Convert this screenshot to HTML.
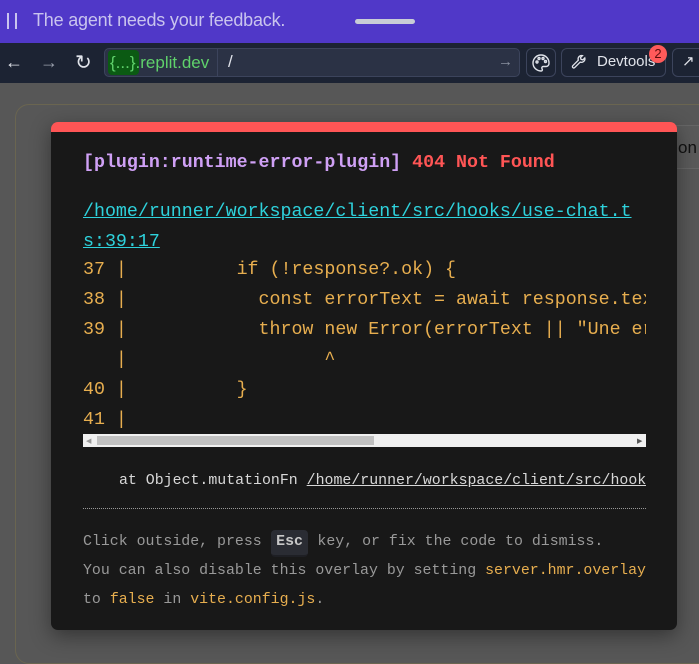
<!DOCTYPE html>
<html><head><meta charset="utf-8"><style>
*{margin:0;padding:0;box-sizing:border-box}
body{width:699px;height:649px;overflow:hidden;background:#575757;font-family:"Liberation Sans",sans-serif;position:relative}
.top{position:absolute;left:0;top:0;width:699px;height:43px;background:#5038c8;color:#c9c4ee;font-size:18px}
.nav{position:absolute;left:0;top:43px;width:699px;height:40px;background:#1c2333;color:#e0e3ea}
.abs{position:absolute}
.m{font-family:"Liberation Mono",monospace;white-space:pre;position:absolute}
.panel{position:absolute;left:51px;top:122px;width:626px;height:508px;background:#181818;border-radius:7px;border-top:10px solid #ff5555;overflow:hidden;box-shadow:0 6px 20px rgba(0,0,0,.4)}
.code{color:#e7ae4f;font-size:18.3px}
.kbd{display:inline-block;background:#2a2c33;border-radius:4px;padding:0 5.5px;line-height:25px;border-bottom:2px solid #1e1f24;color:#c8c8c8;font-weight:bold}
</style></head><body>
<div class="top">
 <div class="abs" style="left:7px;top:13px;width:2px;height:16px;background:#c9c4ee"></div>
 <div class="abs" style="left:15px;top:13px;width:2px;height:16px;background:#c9c4ee"></div>
 <div class="abs" style="left:33px;top:10px;letter-spacing:-0.2px">The agent needs your feedback.</div>
 <div class="abs" style="left:355px;top:19px;width:60px;height:5px;border-radius:3px;background:#c8ccd6"></div>
</div>
<div class="nav">
 <div class="abs" style="left:5px;top:9px;font-size:18px">←</div>
 <div class="abs" style="left:40px;top:9px;font-size:18px;color:#9aa0ad">→</div>
 <div class="abs" style="left:75px;top:7px;font-size:20px">↻</div>
 <div class="abs" style="left:104px;top:5px;width:416px;height:29px;border:1px solid #3c445c;border-radius:5px;background:#2b3245"></div>
 <div class="abs" style="left:108px;top:7px;width:31px;height:25px;background:#0b5a13;border-radius:4px"></div>
 <div class="abs" style="left:110px;top:10px;font-size:17px;color:#5fd16b">{...}.replit.dev</div>
 <div class="abs" style="left:217px;top:6px;width:1px;height:28px;background:#3c445c"></div>
 <div class="abs" style="left:228px;top:9px;font-size:17px">/</div>
 <div class="abs" style="left:498px;top:10px;font-size:15px;color:#8a91a0">→</div>
 <div class="abs" style="left:526px;top:5px;width:30px;height:29px;border:1px solid #3c445c;border-radius:6px"></div>
 <svg class="abs" style="left:531px;top:10px" width="20" height="20" viewBox="0 0 20 20" fill="none" stroke="#e0e3ea" stroke-width="1.4"><path d="M10 2a8 8 0 1 0 0 16c1.5 0 1.6-1.4 1-2.3-.6-1 .1-2.2 1.3-2.2H15a3 3 0 0 0 3-3A8 8 0 0 0 10 2z"/><circle cx="6" cy="9" r="1"/><circle cx="8" cy="5.5" r="1"/><circle cx="12" cy="5.5" r="1"/><circle cx="14.5" cy="8.5" r="1"/></svg>
 <div class="abs" style="left:561px;top:5px;width:105px;height:29px;border:1px solid #3c445c;border-radius:6px"></div>
 <svg class="abs" style="left:571px;top:11px" width="16" height="16" viewBox="0 0 16 16" fill="none" stroke="#e0e3ea" stroke-width="1.3"><path d="M10.5 1.5a3.5 3.5 0 0 0-3.2 4.7L1.8 11.7a1.3 1.3 0 0 0 1.9 1.9l5.5-5.5a3.5 3.5 0 0 0 4.6-4.2l-2 2-1.8-.5-.5-1.8 2-2a3.5 3.5 0 0 0-1-.1z"/></svg>
 <div class="abs" style="left:597px;top:10px;font-size:15px">Devtools</div>
 <div class="abs" style="left:649px;top:2px;width:18px;height:18px;border-radius:9px;background:#ff5a5a;color:#5a0d0d;font-size:13px;text-align:center;line-height:18px">2</div>
 <div class="abs" style="left:672px;top:5px;width:40px;height:29px;border:1px solid #3c445c;border-radius:6px"></div>
 <div class="abs" style="left:682px;top:9px;font-size:15px">↗</div>
</div>
<div class="abs" style="left:15px;top:104px;width:700px;height:560px;border:1px solid #6a6550;border-radius:14px"></div>
<div class="abs" style="left:670px;top:125px;width:40px;height:44px;background:#5a5a5a;border-top:1px solid #666;border-bottom:1px solid #666"></div>
<div class="abs" style="left:678px;top:138px;font-size:17px;color:#111">on</div>
<div class="panel">
 <div class="m" style="left:32px;top:21px;font-size:18.3px;font-weight:bold;color:#cfa0f5">[plugin:runtime-error-plugin] <span style="color:#ff5555">404 Not Found</span></div>
 <div class="m" style="left:32px;top:70px;font-size:18.3px;color:#2ed2dc;text-decoration:underline">/home/runner/workspace/client/src/hooks/use-chat.t</div>
 <div class="m" style="left:32px;top:100px;font-size:18.3px;color:#2ed2dc;text-decoration:underline">s:39:17</div>
 <div class="abs" style="left:32px;top:123px;width:563px;height:180px;overflow:hidden">
  <div class="m code" style="left:0;top:0;line-height:30px">37 |          if (!response?.ok) {
38 |            const errorText = await response.text();
39 |            throw new Error(errorText || "Une erreur");
   |                  ^
40 |          }
41 |</div>
 </div>
 <div class="abs" style="left:32px;top:302px;width:563px;height:13px;background:#f0f0f0"></div>
 <div class="abs" style="left:46px;top:304px;width:277px;height:9px;background:#c1c1c1"></div>
 <div class="abs" style="left:35px;top:305px;font-size:7px;color:#999">◀</div>
 <div class="abs" style="left:586px;top:305px;font-size:7px;color:#555">▶</div>
 <div class="abs" style="left:32px;top:340px;width:563px;height:22px;overflow:hidden">
  <div class="m" style="left:36px;top:1px;font-size:14.9px;color:#d8d8d8">at Object.mutationFn <u>/home/runner/workspace/client/src/hooks/use-chat.ts:39:17</u></div>
 </div>
 <div class="abs" style="left:32px;top:376px;width:563px;border-top:1px dotted #999"></div>
 <div class="m" style="left:32px;top:396px;font-size:14.9px;line-height:29px;color:#999">Click outside, press <span class="kbd">Esc</span> key, or fix the code to dismiss.
You can also disable this overlay by setting <span style="color:#e7ae4f">server.hmr.overlay</span>
to <span style="color:#e7ae4f">false</span> in <span style="color:#e7ae4f">vite.config.js</span>.</div>
</div>
</body></html>
